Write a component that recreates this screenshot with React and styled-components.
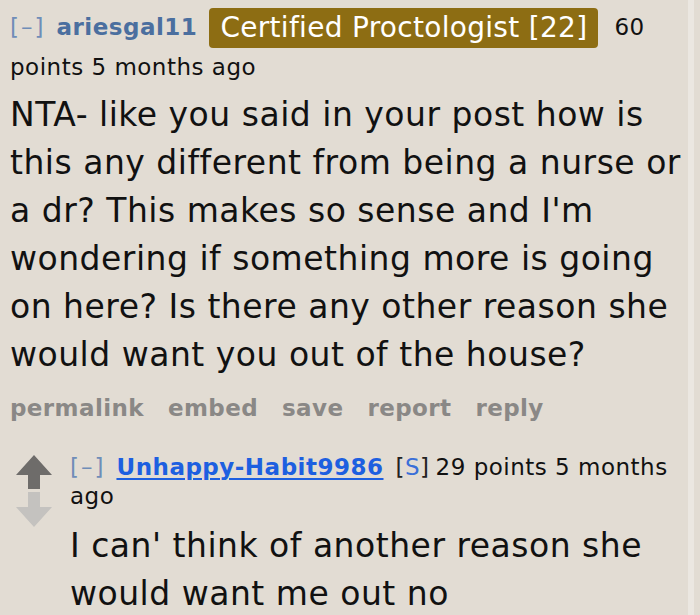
import React from 'react';
import styled, { createGlobalStyle } from 'styled-components';

const GlobalStyle = createGlobalStyle`
  html, body {
    margin: 0;
    padding: 0;
    background: #e2dcd3;
  }
  body {
    font-family: "DejaVu Sans", Verdana, sans-serif;
    color: #111;
  }
`;

const Page = styled.div`
  width: 694px;
  height: 615px;
  overflow: hidden;
  background: #e2dcd3;
  border-right: 6px solid #ebe7e1;
  padding: 8px 0 0 10px;
  box-sizing: border-box;
`;

const Tagline = styled.div`
  font-size: 23px;
  letter-spacing: 0.5px;
  line-height: 39px;
  color: #111;
`;

const Toggle = styled.span`
  color: #6f8db8;
  letter-spacing: 2px;
  margin-right: 11px;
`;

const Author = styled.a`
  font-weight: bold;
  color: ${p => (p.$link ? '#1d5fe0' : '#4b6f9f')};
  text-decoration: ${p => (p.$link ? 'underline' : 'none')};
  text-underline-offset: 3px;
  text-decoration-thickness: 2px;
`;

const Flair = styled.span`
  display: inline-block;
  background: #8d6d13;
  color: #fff;
  font-size: 28px;
  letter-spacing: 0.3px;
  line-height: 40px;
  padding: 0 11px;
  border-radius: 4px;
  margin: 0 16px 0 12px;
  vertical-align: top;
`;

const Body = styled.div`
  font-size: 33px;
  letter-spacing: 0.5px;
  line-height: 48px;
  margin: 4px 0 0;
`;

const Buttons = styled.ul`
  list-style: none;
  display: flex;
  gap: 24px;
  margin: 16px 0 0;
  padding: 0;
  font-size: 23px;
  letter-spacing: 0.4px;
  font-weight: bold;
  color: #8a8886;
`;

const Child = styled.div`
  display: flex;
  margin-top: 32px;
`;

const Votes = styled.div`
  width: 60px;
  flex-shrink: 0;
  padding: 1px 0 0 6px;
  box-sizing: border-box;
`;

const ChildMain = styled.div`
  flex: 1;
`;

const ChildTagline = styled(Tagline)`
  line-height: 29px;
`;

const Submitter = styled.span`
  margin: 0 6px 0 12px;
  color: #222;
  b {
    font-weight: normal;
    color: #3a6fd8;
  }
`;

const ChildBody = styled(Body)`
  margin-top: 11px;
`;

const VoteArrows = () => (
  <svg width="38" height="76" viewBox="0 0 38 76">
    <path d="M18 1 L36 21 L24 21 L24 35 L12 35 L12 21 L0 21 Z" fill="#6e6c6a" />
    <path d="M12 38 L24 38 L24 53 L36 53 L18 73 L0 53 L12 53 Z" fill="#c4c2bf" />
  </svg>
);

export default function App() {
  return (
    <>
      <GlobalStyle />
      <Page>
        <Tagline>
          <Toggle>[–]</Toggle>
          <Author>ariesgal11</Author>
          <Flair>Certified Proctologist [22]</Flair>
          60 points 5 months ago
        </Tagline>
        <Body>
          NTA- like you said in your post how is this any different from being a nurse or a dr? This makes so sense and I'm wondering if something more is going on here? Is there any other reason she would want you out of the house?
        </Body>
        <Buttons>
          <li>permalink</li>
          <li>embed</li>
          <li>save</li>
          <li>report</li>
          <li>reply</li>
        </Buttons>
        <Child>
          <Votes>
            <VoteArrows />
          </Votes>
          <ChildMain>
            <ChildTagline>
              <Toggle>[–]</Toggle>
              <Author $link>Unhappy-Habit9986</Author>
              <Submitter>
                [<b>S</b>]
              </Submitter>
              29 points 5 months ago
            </ChildTagline>
            <ChildBody>
              I can' think of another reason she would want me out no
            </ChildBody>
          </ChildMain>
        </Child>
      </Page>
    </>
  );
}
